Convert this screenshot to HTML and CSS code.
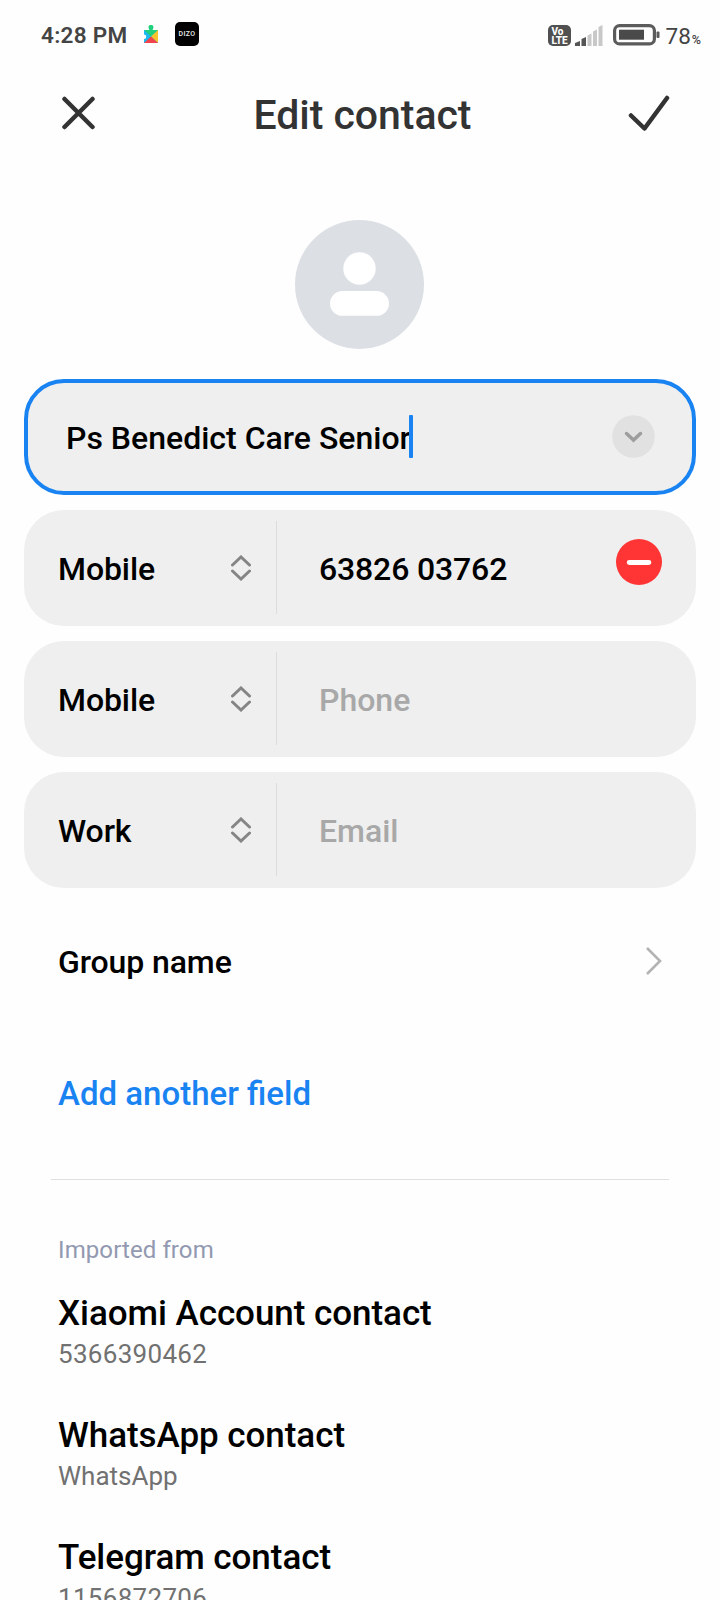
FILE: index.html
```html
<!DOCTYPE html>
<html lang="en">
<head>
<meta charset="utf-8">
<title>Edit contact</title>
<link rel="stylesheet" href="styles.css">
</head>
<body>
<main class="screen">
  <div class="status">
    <span class="time">4:28 PM</span>
    <svg class="puzzle" width="24" height="24" viewBox="0 0 24 24">
      <path d="M5 8h14v13H5v-4a2.200 2.200 0 1 0 0-4.500z" fill="#19b8f0"/>
      <path d="M5 8h5.500c-1.800-3 -1-5 1.500-5s3.300 2 1.500 5H19l-7 6.500z" fill="#1fd07c"/>
      <path d="M19 8v13l-7-6.500z" fill="#f8c62c"/>
      <path d="M5 21l7-6.500 7 6.500z" fill="#f0434c"/>
    </svg>
    <span class="dizo">DIZO</span>
    <span class="volte"><span class="vo">Vo</span><span class="lte">LTE</span></span>
    <svg class="signal" width="28" height="21" viewBox="0 0 28 21">
      <path d="M0 21v-3l5-2v5zM6.500 21v-7l4.500-2v9z" fill="#555"/>
      <path d="M12.500 21V10.500l4-2V21zM18 21V6.500l4-2V21zM23.500 21V2l4-2v21z" fill="#c8c8c8"/>
    </svg>
    <svg class="battery" width="47" height="22" viewBox="0 0 47 22">
      <rect x="1.600" y="1.600" width="39.800" height="18.300" rx="5" fill="none" stroke="#5b5b5b" stroke-width="3.200"/>
      <rect x="6" y="5.700" width="25" height="10" fill="#4a4a4a"/>
      <rect x="43.500" y="7.500" width="3" height="6.500" rx="1" fill="#5b5b5b"/>
    </svg>
    <span class="level">78<span class="percent">%</span></span>
  </div>

  <header class="header">
    <svg width="34" height="34" viewBox="0 0 34 34"><path d="M3.500 3l28 28M31.500 3L3.500 31" class="ink"/></svg>
    <h1 class="title">Edit contact</h1>
    <svg width="42" height="38" viewBox="0 0 42 38"><path d="M3 21.500L16.500 34.500 39 4" class="ink"/></svg>
  </header>

  <svg class="avatar" width="130" height="130" viewBox="0 0 130 130">
    <circle cx="65.500" cy="64.500" r="64.500" fill="#dcdfe4"/>
    <circle cx="65.500" cy="48.500" r="16.200" fill="#fff"/>
    <rect x="36" y="71" width="59" height="24.800" rx="12.400" fill="#fff"/>
  </svg>

  <form class="fields">
    <div class="field focused">
      <span class="name">Ps Benedict Care Senior</span><span class="caret"></span>
      <svg class="expand" width="43" height="43" viewBox="0 0 43 43"><circle cx="21.500" cy="21.500" r="21.300" fill="#e1e1e1"/><path d="M14.500 18.500l7 6.500 7-6.500" fill="none" stroke="#9d9d9d" stroke-width="3.500" stroke-linecap="round"/></svg>
    </div>
    <div class="field">
      <span class="kind">Mobile</span>
      <svg class="sort" width="20" height="26" viewBox="0 0 20 26"><path d="M1.500 10L10 2l8.500 8M1.500 16l8.500 8 8.500-8"/></svg>
      <span class="divider"></span>
      <span class="value digits">63826 03762</span>
      <svg class="remove" width="46" height="46" viewBox="0 0 46 46"><circle cx="23" cy="23" r="23" fill="#ff3535"/><rect x="10.800" y="21" width="24.500" height="5" rx="2.400" fill="#fff"/></svg>
    </div>
    <div class="field">
      <span class="kind">Mobile</span>
      <svg class="sort" width="20" height="26" viewBox="0 0 20 26"><path d="M1.500 10L10 2l8.500 8M1.500 16l8.500 8 8.500-8"/></svg>
      <span class="divider"></span>
      <span class="value hint">Phone</span>
    </div>
    <div class="field">
      <span class="kind">Work</span>
      <svg class="sort" width="20" height="26" viewBox="0 0 20 26"><path d="M1.500 10L10 2l8.500 8M1.500 16l8.500 8 8.500-8"/></svg>
      <span class="divider"></span>
      <span class="value hint">Email</span>
    </div>
    <div class="field plain">
      <span class="group">Group name</span>
      <svg class="chevron" width="16" height="28" viewBox="0 0 16 28"><path d="M1 1l13 13L1 27" fill="none" stroke="#b3b3b3" stroke-width="2.600"/></svg>
    </div>
    <div class="field plain add"><span>Add another field</span></div>
  </form>

  <section class="sources">
    <h2 class="caption">Imported from</h2>
    <div class="source"><p class="origin">Xiaomi Account contact</p><p class="detail number">5366390462</p></div>
    <div class="source"><p class="origin">WhatsApp contact</p><p class="detail">WhatsApp</p></div>
    <div class="source"><p class="origin">Telegram contact</p><p class="detail number">1156872706</p></div>
  </section>
</main>
</body>
</html>
```
FILE: styles.css
```css
* { box-sizing: border-box; }
body { margin: 0; background: #fefefe; font-family: Roboto, sans-serif; color: #000; }
h1, h2, p { margin: 0; }
svg { display: block; flex: none; }
.screen { width: 720px; height: 1600px; overflow: hidden; background: #fefefe; }

.status { display: flex; align-items: center; height: 70px; padding: 0 19px 0 41px; color: #444; white-space: nowrap; }
.time { width: 98px; font-size: 22.5px; font-weight: 600; letter-spacing: 0.3px; }
.dizo { width: 24px; height: 24px; margin-left: 12px; border-radius: 5px; background: #000; color: #eee; font-size: 7px; font-weight: 500; line-height: 24px; text-align: center; margin-top: -2px; letter-spacing: 0.4px; }
.puzzle { margin-top: -2px; }
.volte { display: flex; flex-direction: column; align-items: flex-start; width: 23px; height: 21px; margin-left: auto; padding: 2px 0 0 3px; border-radius: 5px; background: #505050; color: #fff; font-size: 10px; line-height: 9px; font-weight: 800; }
.signal { margin-left: 4px; }
.battery { margin-left: 10px; }
.level { margin-left: 5px; font-size: 22.5px; padding-top: 2px; }
.percent { margin-left: 1px; font-size: 12.5px; font-weight: 500; }

.header { display: flex; align-items: center; justify-content: space-between; height: 86px; padding: 0 50px 0 61px; }
.title { font-size: 41px; line-height: 48px; font-weight: 500; letter-spacing: -0.05px; color: #333; padding: 3px 0 0 2px; }
.ink { fill: none; stroke: #333; stroke-width: 4.5; stroke-linecap: round; stroke-linejoin: round; }
.avatar { margin: 64px auto 29px 294px; }

.fields { display: flex; flex-direction: column; gap: 15px; padding: 0 24px; font-size: 32px; line-height: 38px; font-weight: 500; }
.field { display: flex; align-items: center; height: 116px; border-radius: 40px; background: #efefef; padding: 2px 34px 0; }
.focused { border: 4px solid #1983f2; padding: 0 37px 0 38px; }
.name { padding-top: 1px; }
.caret { width: 4px; height: 43px; margin: -1px 0 0 -2px; background: #1983f2; border-radius: 1px; }
.expand { margin: -1px 0 0 auto; }
.kind { width: 173px; letter-spacing: -0.1px; }
.digits { letter-spacing: -0.15px; }
.sort { margin-top: -2px; }
.sort path { fill: none; stroke: #858585; stroke-width: 3; stroke-linecap: round; }
.divider { width: 1px; height: 93px; margin: -4px 42px 0 25px; background: #dcdcdc; }
.hint { color: #a8a8a8; }
.remove { margin: -15px 0 0 auto; }
.plain { background: none; }
.group { letter-spacing: -0.1px; }
.chevron { margin: -2px 0 0 auto; }
.add { color: #1983f2; font-size: 33px; padding-top: 4px; }

.sources { margin: 29px 51px 0; padding: 56px 7px 0; border-top: 1px solid #e0e0e0; }
.caption { font-size: 24px; line-height: 28px; font-weight: 400; letter-spacing: 0.1px; color: #9299b0; margin-bottom: 27px; }
.source { height: 122px; }
.origin { font-size: 35px; line-height: 40px; font-weight: 500; letter-spacing: -0.05px; padding-top: 3px; }
.detail { font-size: 26px; line-height: 30px; color: #717171; padding-top: 5px; }
.number { letter-spacing: 0.3px; }
```
